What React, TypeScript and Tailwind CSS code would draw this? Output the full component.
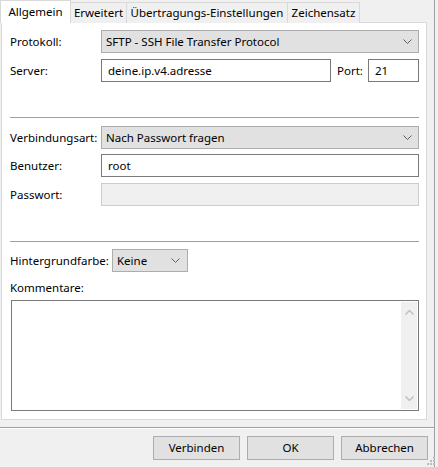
import React from 'react'

const font = { fontFamily: '"Segoe UI", "Noto Sans", "Open Sans", sans-serif' }

function Chevron() {
  return (
    <svg width="9" height="5" viewBox="0 0 9 5">
      <polyline points="0.5,0.5 4.5,4.5 8.5,0.5" fill="none" stroke="#606060" strokeWidth="1" />
    </svg>
  )
}

function Combo({ value, width }: { value: string; width: string }) {
  return (
    <div className={`${width} h-[23px] flex items-center justify-between border border-[#adadad] bg-[#e1e1e1] pl-[4px] pr-[6px]`}>
      <span className="text-[11.5px] text-black leading-none">{value}</span>
      <Chevron />
    </div>
  )
}

function Field({ value, width }: { value?: string; width: string }) {
  return (
    <div className={`${width} h-[23px] flex items-center border border-[#7a7a7a] bg-white pl-[6px]`}>
      <span className="text-[11.5px] text-black leading-none">{value}</span>
    </div>
  )
}

function Row({ label, children, mt }: { label: string; children: React.ReactNode; mt: string }) {
  return (
    <div className={`flex items-center ${mt}`}>
      <div className="w-[91px] text-[11.5px] text-black leading-none whitespace-nowrap">{label}</div>
      {children}
    </div>
  )
}

function Button({ label }: { label: string }) {
  return (
    <div className="w-[87px] h-[24px] flex items-center justify-center border border-[#adadad] bg-[#e1e1e1] text-[11.5px] text-black">
      {label}
    </div>
  )
}

export default function App() {
  const tabs = [
    { name: 'Erweitert', w: 'w-[56px]' },
    { name: 'Übertragungs-Einstellungen', w: 'w-[161px]' },
    { name: 'Zeichensatz', w: 'w-[72px]' },
  ]

  return (
    <div className="w-[438px] h-[467px] bg-[#f0f0f0] relative overflow-hidden select-none" style={font}>
      {/* window edge */}
      <div className="absolute right-[3px] top-0 bottom-0 w-[1px] bg-[#a0a0a0]" />

      {/* Tabs */}
      <div className="flex items-end h-[23px] relative z-10">
        <div className="w-[71px] h-[23px] bg-white border border-b-0 border-[#d9d9d9] flex items-center justify-center text-[11.5px] text-black">
          Allgemein
        </div>
        {tabs.map(t => (
          <div
            key={t.name}
            className={`${t.w} h-[21px] bg-[#f0f0f0] border border-l-0 border-b-0 border-[#d9d9d9] flex items-center justify-center text-[11.5px] text-black whitespace-nowrap`}>
            {t.name}
          </div>
        ))}
      </div>

      {/* Panel */}
      <div className="ml-[1px] -mt-[1px] w-[426px] h-[398px] bg-white border border-[#d9d9d9] pl-[8px] flex flex-col">
        <Row label="Protokoll:" mt="mt-[7px]">
          <Combo value="SFTP - SSH File Transfer Protocol" width="w-[318px]" />
        </Row>
        <Row label="Server:" mt="mt-[6px]">
          <Field value="deine.ip.v4.adresse" width="w-[230px]" />
          <span className="ml-[6px] w-[31px] text-[11.5px] text-black leading-none">Port:</span>
          <Field value="21" width="w-[51px]" />
        </Row>

        <div className="mt-[35px] w-[409px] h-[1px] bg-[#a0a0a0]" />

        <Row label="Verbindungsart:" mt="mt-[8px]">
          <Combo value="Nach Passwort fragen" width="w-[318px]" />
        </Row>
        <Row label="Benutzer:" mt="mt-[5px]">
          <Field value="root" width="w-[318px]" />
        </Row>
        <Row label="Passwort:" mt="mt-[6px]">
          <div className="w-[318px] h-[23px] border border-[#cccccc] bg-[#f0f0f0]" />
        </Row>

        <div className="mt-[35px] w-[409px] h-[1px] bg-[#a0a0a0]" />

        <div className="flex items-center mt-[7px]">
          <span className="w-[102px] text-[11.5px] text-black leading-none whitespace-nowrap">Hintergrundfarbe:</span>
          <div className="w-[76px] h-[23px] flex items-center justify-between border border-[#adadad] bg-[#e1e1e1] pl-[4px] pr-[7px]">
            <span className="text-[11.5px] text-black leading-none">Keine</span>
            <Chevron />
          </div>
        </div>

        <div className="mt-[8px] text-[11.5px] leading-[16px] text-black">Kommentare:</div>

        <div className="mt-[4px] ml-[1px] w-[408px] h-[111px] border border-[#7a7a7a] bg-white flex justify-end p-[1px]">
          <div className="w-[16px] h-full bg-[#f0f0f0] flex flex-col items-center justify-between py-[8px]">
            <svg width="9" height="5" viewBox="0 0 9 5">
              <polyline points="0.5,4.5 4.5,0.5 8.5,4.5" fill="none" stroke="#c0c0c0" strokeWidth="1.5" />
            </svg>
            <svg width="9" height="5" viewBox="0 0 9 5">
              <polyline points="0.5,0.5 4.5,4.5 8.5,0.5" fill="none" stroke="#c0c0c0" strokeWidth="1.5" />
            </svg>
          </div>
        </div>
      </div>

      {/* Bottom separator */}
      <div className="mt-[7px] w-[434px] h-[1px] bg-[#a0a0a0]" />
      <div className="w-[434px] h-[1px] bg-white" />

      {/* Buttons */}
      <div className="mt-[7px] flex justify-end gap-[7px] pr-[10px]">
        <Button label="Verbinden" />
        <Button label="OK" />
        <Button label="Abbrechen" />
      </div>

      {/* gripper */}
      <div className="absolute right-[3px] bottom-[2px] grid grid-cols-3 gap-[1px]">
        {[0, 0, 1, 0, 1, 1, 1, 1, 1].map((v, i) => (
          <div key={i} className={`w-[2px] h-[2px] ${v ? 'bg-[#bcbcbc]' : 'bg-transparent'}`} />
        ))}
      </div>
    </div>
  )
}
